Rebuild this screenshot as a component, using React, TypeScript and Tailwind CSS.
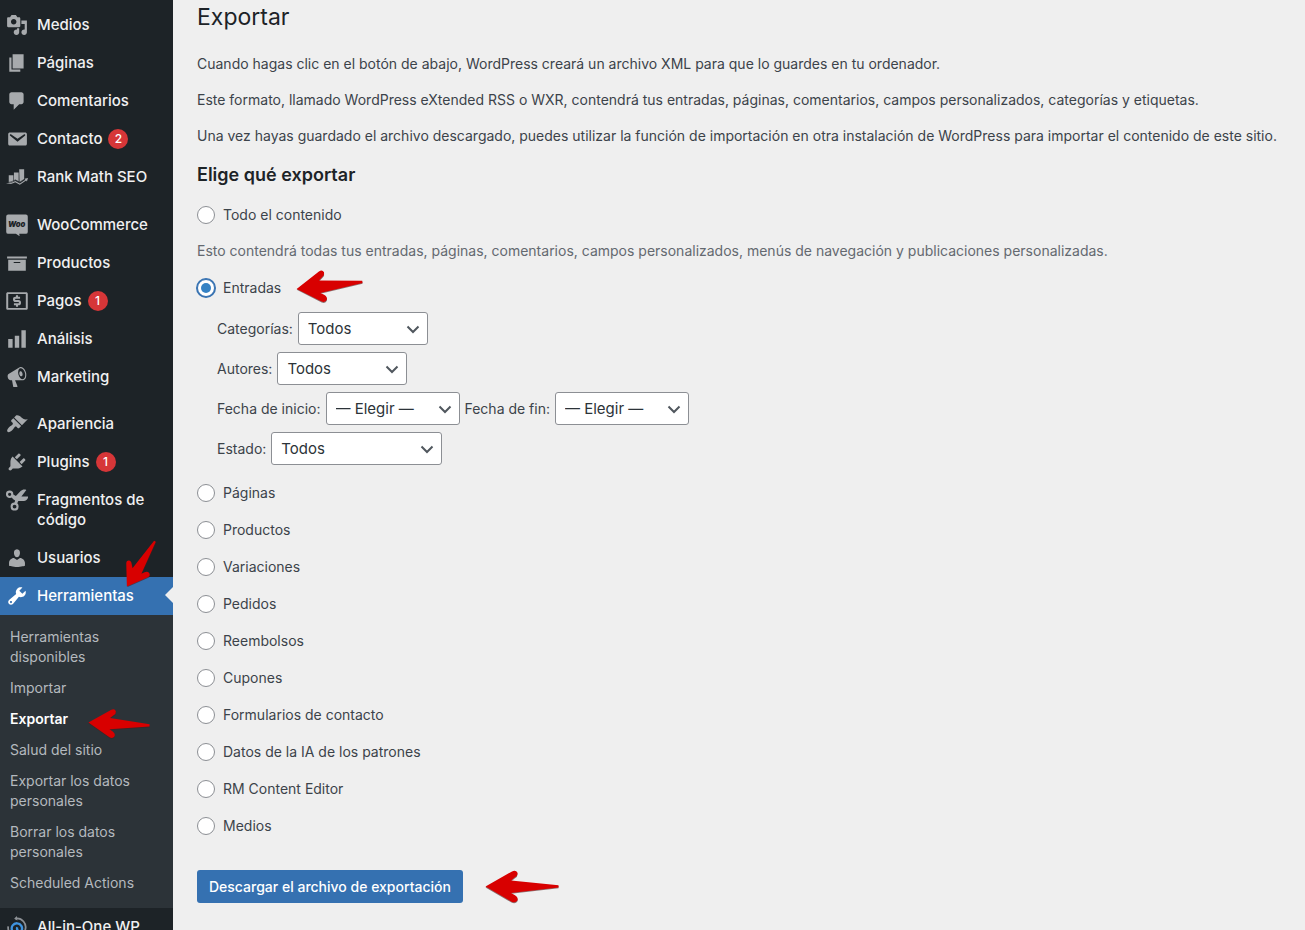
import type { ReactNode } from 'react'
import { clsx } from 'clsx'

/** 20x20 filled glyph, the grid that every admin menu icon is drawn on. */
function Glyph({ d, children }: { d?: string; children?: ReactNode }) {
  return (
    <svg viewBox="0 0 20 20" className="size-[22px] shrink-0" fill="currentColor" aria-hidden="true">
      {d ? <path d={d} fillRule="evenodd" /> : children}
    </svg>
  )
}

const paths = {
  media:
    'M13 11V4c0-.55-.45-1-1-1h-1.670L9 1H5L3.670 3H2c-.55 0-1 .45-1 1v7c0 .55.45 1 1 1h10c.55 0 1-.45 1-1zM7 4.500c1.380 0 2.500 1.120 2.500 2.500S8.380 9.500 7 9.500 4.500 8.380 4.500 7 5.620 4.500 7 4.500zM14 6h5v10.500c0 1.380-1.120 2.500-2.500 2.500S14 17.880 14 16.500s1.120-2.500 2.500-2.500c.17 0 .34.02.5.05V9h-3V6zm-4 8.050V13h2v3.500c0 1.380-1.120 2.500-2.500 2.500S7 17.880 7 16.500 8.120 14 9.500 14c.17 0 .34.02.5.05z',
  page: 'M6 15V2h10v13H6zm-1 1h8v2H3V5h2v11z',
  comments:
    'M5 2h9c1.100 0 2 .9 2 2v7c0 1.100-.9 2-2 2h-2l-5 5v-5H5c-1.100 0-2-.9-2-2V4c0-1.100.9-2 2-2z',
  email:
    'M3.870 4h13.250C18.370 4 19 4.590 19 5.790v8.420c0 1.190-.63 1.790-1.880 1.790H3.870c-1.250 0-1.880-.6-1.880-1.790V5.790c0-1.200.63-1.790 1.880-1.790zm6.620 8.600l6.740-5.530c.24-.2.43-.66.13-1.070-.29-.41-.82-.42-1.170-.17l-5.700 3.860L4.800 5.830c-.35-.25-.88-.24-1.170.17-.3.41-.11.87.13 1.070z',
  archive: 'M19 4v2H1V4h18zM2 7h16v10H2V7zm11 3V9H7v1h6z',
  chart: 'M18 18V2h-4v16h4zm-6 0V7H8v11h4zm-6 0v-8H2v8h4z',
  megaphone:
    'M18.150 5.940c.46 1.620.38 3.220-.02 4.480-.42 1.280-1.260 2.180-2.300 2.480-.16.06-.26.06-.4.06-.06.02-.12.02-.18.02-.06.02-.14.02-.22.02h-6.800l2.220 5.500c.02.14-.06.26-.14.34-.08.1-.24.16-.34.16H6.950c-.1 0-.26-.06-.34-.16-.08-.08-.16-.2-.14-.34l-1-5.500H4.250l-.02-.02c-.5.06-1.080-.18-1.540-.62s-.88-1.080-1.060-1.880c-.24-.8-.2-1.560-.02-2.200.18-.62.58-1.080 1.060-1.300l.02-.02 9-5.400c.1-.06.18-.1.24-.16.06-.04.14-.08.24-.12.16-.08.28-.12.5-.18 1.040-.3 2.240.1 3.220.98s1.840 2.240 2.260 3.860zm-2.580 5.980h-.02c.4-.1.74-.34 1.040-.7.58-.7.86-1.760.86-3.040 0-.64-.1-1.300-.28-1.980-.34-1.360-1.020-2.500-1.780-3.240s-1.680-1.100-2.460-.88c-.82.22-1.400.96-1.700 2-.32 1.040-.28 2.360.06 3.720.38 1.360 1 2.500 1.800 3.240.78.74 1.620 1.100 2.480.88zm-2.540-7.080c.22-.04.42-.02.62.04.38.16.76.48 1.020 1s.42 1.200.42 1.780c0 .3-.04.56-.12.8-.18.48-.44.84-.86.94-.34.1-.8-.06-1.140-.4s-.64-.86-.78-1.500c-.18-.62-.12-1.240.02-1.720s.48-.84.82-.94z',
  appearance:
    'M14.480 11.060L7.410 3.990l1.500-1.500c.5-.56 2.300-.47 3.510.32 1.210.8 1.430 1.280 2.910 2.100 1.180.64 2.450 1.260 4.450.85zm-.71.71L6.700 4.700 4.930 6.470c-.39.39-.39 1.020 0 1.410l1.060 1.060c.39.39.39 1.030 0 1.420-.6.6-1.430 1.110-2.210 1.690-.35.26-.7.53-1.010.84C1.430 14.230.4 16.080 1.400 17.070c.99 1 2.840-.03 4.180-1.360.31-.31.58-.66.85-1.020.57-.78 1.080-1.610 1.690-2.210.39-.39 1.020-.39 1.410 0l1.060 1.060c.39.39 1.020.39 1.410 0z',
  plugins:
    'M13.110 4.360L9.870 7.600 8 5.730l3.240-3.240c.35-.34 1.050-.2 1.560.32.52.51.66 1.210.31 1.550zm-8 1.770l.91-1.120 9.010 9.010-1.190.84c-.71.71-2.630 1.160-3.820 1.160H6.140L4.900 17.260c-.59.59-1.540.59-2.120 0-.59-.58-.59-1.530 0-2.120l1.240-1.240v-3.880c0-1.130.4-3.190 1.090-3.890zm7.260 3.970l3.240-3.240c.34-.35 1.040-.21 1.550.31.52.51.66 1.210.31 1.550l-3.240 3.250z',
  users:
    'M10 9.250c-2.270 0-2.730-3.440-2.730-3.440C7 4.020 7.820 2 9.970 2c2.160 0 2.980 2.020 2.710 3.810 0 0-.41 3.440-2.680 3.440zm0 2.570L12.720 10c2.390 0 4.520 2.330 4.520 4.530v2.490s-3.650 1.130-7.240 1.130c-3.650 0-7.240-1.130-7.240-1.130v-2.490c0-2.250 1.940-4.480 4.470-4.480z',
  tools:
    'M16.680 9.770c-1.340 1.340-3.300 1.670-4.950.99l-5.410 6.520c-.99.99-2.590.99-3.580 0s-.99-2.590 0-3.570l6.520-5.420c-.68-1.650-.35-3.610.99-4.950 1.280-1.280 3.120-1.620 4.720-1.060l-2.890 2.890 2.820 2.820 2.860-2.870c.53 1.580.18 3.390-1.080 4.650zM3.810 16.210c.4.39 1.040.39 1.430 0 .4-.4.4-1.040 0-1.430-.39-.4-1.030-.4-1.430 0-.39.39-.39 1.030 0 1.430z',
}

function RankMathIcon() {
  return (
    <Glyph>
      <path d="M2.500 8.500h4.200v6.200L2.500 15.500zM7.200 5.800h4.300v8.600L8.500 12.800l-1.300.8zM12 3h4.500v9.300L12.300 15z" />
      <path d="M0 15.800c3 .4 5.500-.4 8.400-2.200l4.200 2.200 5-3.400-.8-.8 3.200-.6-1 3-.7-.9-5.700 3.900-4.300-2.200c-2.700 1.600-5.300 2.200-8.300 1z" />
      <path d="M2.300 14.900c2-.2 4-1 6.100-2.300l4.200 2.100 4.200-2.800" fill="none" stroke="#1d2327" strokeWidth=".6" />
    </Glyph>
  )
}

function WooIcon() {
  return (
    <Glyph>
      <path d="M2 .5h16A1.800 1.800 0 0 1 19.800 2.300v14A1.800 1.800 0 0 1 18 18h-6l.4 2.200L9 18H2A1.800 1.800 0 0 1 .2 16.300v-14A1.800 1.800 0 0 1 2 .5z" />
      <text
        x="9.700"
        y="11.700"
        textAnchor="middle"
        fontFamily="Inter, sans-serif"
        fontSize="7"
        fontWeight="900"
        fontStyle="italic"
        fill="#1d2327"
      >
        Woo
      </text>
    </Glyph>
  )
}

function PaymentsIcon() {
  return (
    <Glyph>
      <path
        fillRule="evenodd"
        d="M1.700 2h16.600c.9 0 1.500.6 1.500 1.500v13c0 .9-.6 1.500-1.500 1.500H1.700c-.9 0-1.500-.6-1.500-1.500v-13C.2 2.600.8 2 1.700 2zm.3 1.700v12.600h16V3.700z"
      />
      <path
        d="M12.800 7H8.700c-.9 0-1.400.5-1.400 1.400S7.800 10 8.700 10h2.600c.9 0 1.400.5 1.400 1.500s-.5 1.500-1.400 1.500H7.200M10 4.800V7m0 6v2.200"
        fill="none"
        stroke="currentColor"
        strokeWidth="1.900"
      />
    </Glyph>
  )
}

function ScissorsIcon() {
  return (
    <Glyph>
      <g fill="none" stroke="currentColor" strokeWidth="1.900">
        <circle cx="3.300" cy="4.800" r="2.400" />
        <circle cx="7.800" cy="16" r="2.700" />
      </g>
      <path d="M4.600 6.800 6.200 4.700 9 6.300 13.300 1.800c1.500-1.500 3.500-1.800 5.200-1L14 6.800h6.200c-.2 2.500-1.800 4-4 4h-5l-1.600 3.600-2.300-.8 1-3.100C6.900 9.700 5.700 8.500 4.600 6.800z" />
    </Glyph>
  )
}

function BackupIcon() {
  return (
    <Glyph>
      <g fill="none" strokeWidth="1.600">
        <path d="M8.500 2.300a8 8 0 0 1 8.900 10.500M2 9.500a8 8 0 0 0 4.200 8" stroke="#8c9095" />
        <path d="M5.500 13a4.700 4.700 0 1 1 8.600.4M10.300 10.300a2.500 2.500 0 0 0 2.600 3.600" stroke="#3f94e0" strokeWidth="2.100" />
      </g>
      <path d="M9.900 0 7.400 2.400 10.400 4.200z" fill="#8c9095" />
    </Glyph>
  )
}

/** Red marker arrow; size, place and angle come from the caller. */
function Marker({ className }: { className: string }) {
  return (
    <svg
      viewBox="0 0 74 36"
      preserveAspectRatio="none"
      className={clsx('pointer-events-none absolute z-10 overflow-visible', className)}
      aria-hidden="true"
    >
      <path
        d="M.5 19 27 2.500Q31 .5 32.500 4 33 7 30 9l-4 3.500L73.500 17.500v2.500L26 26l4 2.500q3.500 2.500 2.500 5.500-2 3.500-6 1.500z"
        fill="#4a1a1a"
        opacity=".6"
      />
      <path
        d="M.5 18 27 1.500Q31-.5 32.500 3 33 6 30 8l-4 3.500L73.500 16.500v2.500L26 25l4 2.500q3.500 2.500 2.500 5.500-2 3.500-6 1.500z"
        fill="#d80000"
      />
    </svg>
  )
}

function MenuItem({ icon, label, count }: { icon: ReactNode; label: string; count?: number }) {
  return (
    <li>
      <a href="#" className="flex gap-[9px] py-[9px] pl-[6px] text-[#f0f0f1]">
        <span className="-my-px text-[#a7aaad]">{icon}</span>
        <span className="leading-5">{label}</span>
        {count ? (
          <span className="-ml-[3px] flex size-5 items-center justify-center rounded-full bg-[#d63638] text-xs text-white">
            {count}
          </span>
        ) : null}
      </a>
    </li>
  )
}

const toolLinks = [
  'Herramientas disponibles',
  'Importar',
  'Exportar',
  'Salud del sitio',
  'Exportar los datos personales',
  'Borrar los datos personales',
  'Scheduled Actions',
]

function Sidebar() {
  return (
    <nav className="w-[173px] shrink-0 bg-[#1d2327] pt-[6px] text-[15px] font-medium">
      <ul>
        <MenuItem icon={<Glyph d={paths.media} />} label="Medios" />
        <MenuItem icon={<Glyph d={paths.page} />} label="Páginas" />
        <MenuItem icon={<Glyph d={paths.comments} />} label="Comentarios" />
        <MenuItem icon={<Glyph d={paths.email} />} label="Contacto" count={2} />
        <MenuItem icon={<RankMathIcon />} label="Rank Math SEO" />
      </ul>
      <ul className="mt-[10px]">
        <MenuItem icon={<WooIcon />} label="WooCommerce" />
        <MenuItem icon={<Glyph d={paths.archive} />} label="Productos" />
        <MenuItem icon={<PaymentsIcon />} label="Pagos" count={1} />
        <MenuItem icon={<Glyph d={paths.chart} />} label="Análisis" />
        <MenuItem icon={<Glyph d={paths.megaphone} />} label="Marketing" />
      </ul>
      <ul className="mt-[9px]">
        <MenuItem icon={<Glyph d={paths.appearance} />} label="Apariencia" />
        <MenuItem icon={<Glyph d={paths.plugins} />} label="Plugins" count={1} />
        <MenuItem icon={<ScissorsIcon />} label="Fragmentos de código" />
        <MenuItem icon={<Glyph d={paths.users} />} label="Usuarios" />
        <li>
          <a href="#" className="relative flex gap-[9px] bg-[#3571b1] py-[9px] pl-[6px] text-white">
            <span className="-my-px">
              <Glyph d={paths.tools} />
            </span>
            <span className="leading-5">Herramientas</span>
            <span className="absolute top-[10px] right-0 border-y-8 border-r-8 border-y-transparent border-r-[#efefef]" />
            <Marker className="-top-[27px] left-[114px] h-[28px] w-[54px] -rotate-[58deg]" />
          </a>
          <ul className="flex flex-col gap-[11px] bg-[#2c3338] px-[10px] pt-[12px] pb-[15px] text-sm leading-5 font-normal text-[#b4b9be]">
            {toolLinks.map((link) => (
              <li key={link} className="relative">
                <a href="#" className={clsx('block', link === 'Exportar' && 'font-semibold text-white')}>
                  {link}
                </a>
                {link === 'Exportar' ? (
                  <Marker className="top-0 left-[78px] h-[30px] w-[62px] rotate-3" />
                ) : null}
              </li>
            ))}
          </ul>
        </li>
        <MenuItem icon={<BackupIcon />} label="All-in-One WP" />
      </ul>
    </nav>
  )
}

function ContentOption({ label, checked, children }: { label: string; checked?: boolean; children?: ReactNode }) {
  return (
    <div className="relative flex">
      <label className="flex items-center gap-2 leading-5">
        <input
          type="radio"
          name="content"
          defaultChecked={checked}
          className="flex size-[18px] appearance-none items-center justify-center rounded-full border border-[#8c8f94] bg-white checked:border-[#3571b1] checked:ring-1 checked:ring-[#3571b1] checked:before:size-[10px] checked:before:rounded-full checked:before:bg-[#3582c4]"
        />
        {label}
      </label>
      {children}
    </div>
  )
}

function Filter({ id, label, value, width }: { id: string; label: string; value: string; width: string }) {
  return (
    <div className="flex items-center gap-[5px]">
      <label htmlFor={id}>{label}</label>
      <span className="relative">
        <select
          id={id}
          className={clsx(
            'block h-[33px] appearance-none rounded-[3px] border border-[#8c8f94] bg-white pl-[9px] text-[15px] text-[#2c3338]',
            width,
          )}
        >
          <option>{value}</option>
        </select>
        <svg
          viewBox="0 0 14 9"
          className="pointer-events-none absolute top-[13px] right-[8px] h-[9px] w-[14px]"
          fill="none"
          stroke="#50575e"
          strokeWidth="2"
          aria-hidden="true"
        >
          <path d="m1.500 1.500 5.500 5.500 5.500-5.500" />
        </svg>
      </span>
    </div>
  )
}

const otherContent = [
  'Páginas',
  'Productos',
  'Variaciones',
  'Pedidos',
  'Reembolsos',
  'Cupones',
  'Formularios de contacto',
  'Datos de la IA de los patrones',
  'RM Content Editor',
  'Medios',
]

export default function App() {
  return (
    <div className="flex h-screen overflow-hidden bg-[#efefef] font-['Inter','Liberation_Sans',sans-serif] text-sm text-[#3c434a]">
      <Sidebar />
      <main className="min-w-0 flex-1 pt-px pl-6">
        <h1 className="text-[23px] leading-8 text-[#1d2327]">Exportar</h1>
        <div className="mt-[21px] flex flex-col gap-4 leading-5">
          <p>Cuando hagas clic en el botón de abajo, WordPress creará un archivo XML para que lo guardes en tu ordenador.</p>
          <p>
            Este formato, llamado WordPress eXtended RSS o WXR, contendrá tus entradas, páginas, comentarios, campos
            personalizados, categorías y etiquetas.
          </p>
          <p>
            Una vez hayas guardado el archivo descargado, puedes utilizar la función de importación en otra instalación
            de WordPress para importar el contenido de este sitio.
          </p>
        </div>
        <h2 className="mt-[17px] text-lg leading-6 font-semibold text-[#1d2327]">Elige qué exportar</h2>
        <form onSubmit={(e) => e.preventDefault()}>
          <div className="mt-[18px]">
            <ContentOption label="Todo el contenido" />
          </div>
          <p className="mt-4 leading-5 text-[#646970]">
            Esto contendrá todas tus entradas, páginas, comentarios, campos personalizados, menús de navegación y
            publicaciones personalizadas.
          </p>
          <div className="mt-[17px]">
            <ContentOption label="Entradas" checked>
              <Marker className="-top-[9px] left-[99px] h-[33px] w-[67px] -rotate-6" />
            </ContentOption>
          </div>
          <div className="mt-[14px] flex flex-col gap-[7px] pl-5">
            <Filter id="category" label="Categorías:" value="Todos" width="w-[130px]" />
            <Filter id="author" label="Autores:" value="Todos" width="w-[130px]" />
            <div className="flex gap-[5px]">
              <Filter id="start-date" label="Fecha de inicio:" value="— Elegir —" width="w-[134px]" />
              <Filter id="end-date" label="Fecha de fin:" value="— Elegir —" width="w-[134px]" />
            </div>
            <Filter id="status" label="Estado:" value="Todos" width="w-[171px]" />
          </div>
          <div className="mt-[18px] flex flex-col gap-[17px]">
            {otherContent.map((label) => (
              <ContentOption key={label} label={label} />
            ))}
          </div>
          <div className="relative mt-[34px] flex">
            <button type="submit" className="h-[33px] rounded-[3px] bg-[#3571b1] px-3 font-medium text-white">
              Descargar el archivo de exportación
            </button>
            <Marker className="top-0 left-[288px] h-[33px] w-[74px]" />
          </div>
        </form>
      </main>
    </div>
  )
}
